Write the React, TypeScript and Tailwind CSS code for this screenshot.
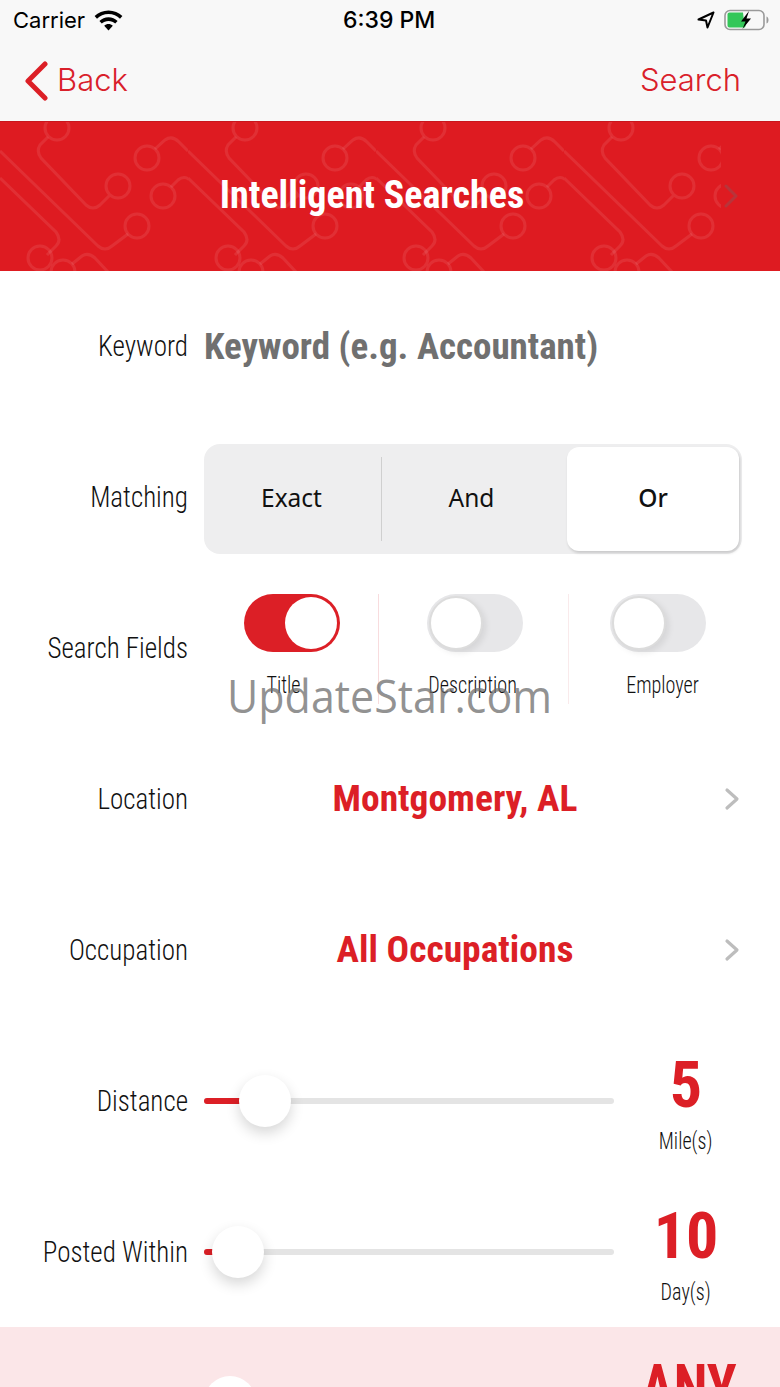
import React from 'react';

const narrow = "font-['Liberation_Sans_Narrow','Roboto_Condensed','Liberation_Sans',sans-serif]";

const CircuitPattern = () => (
  <svg className="absolute left-0 top-0 h-[150px] w-[721px]" viewBox="0 0 721 150" fill="none">
    <defs>
      <pattern id="circuit" width="188" height="150" patternUnits="userSpaceOnUse">
        <g stroke="#fff" strokeOpacity="0.085" strokeWidth="3">
          <circle cx="57" cy="6" r="12" />
          <path d="M48 15 L40 23 Q36 29 41 36 L86 83 Q93 89 100 83 L109 74" />
          <circle cx="118" cy="64" r="12" />
          <circle cx="147" cy="36" r="12" />
          <path d="M155 27 L165 18 Q172 13 179 20 L188 29" />
          <path d="M0 29 L98 124 Q105 130 112 124 L128 112" />
          <circle cx="137" cy="104" r="12" />
          <circle cx="163" cy="74" r="12" />
          <path d="M171 65 L178 58 Q184 53 190 58" />
          <path d="M0 56 L56 110 Q62 118 56 124 L47 133" />
          <circle cx="40" cy="136" r="12" />
          <circle cx="63" cy="150" r="12" />
          <path d="M72 142 L82 134 Q88 130 95 136 L108 150" />
        </g>
      </pattern>
    </defs>
    <rect width="721" height="150" fill="url(#circuit)" />
  </svg>
);

const StatusBar = () => (
  <div className="relative flex h-[40px] items-center justify-between pl-[13px] pr-[11px] text-black font-['Inter',sans-serif]">
    <div className="flex items-center gap-[9px]">
      <span className="text-[22px] leading-none">Carrier</span>
      <svg width="29" height="21" viewBox="0 0 29 21" fill="#000">
        <path d="M14.5 0.5C9 0.5 4.2 2.6 0.6 6.1L3 8.8C6 5.9 10 4.1 14.5 4.1S23 5.9 26 8.8L28.4 6.1C24.8 2.6 20 0.5 14.5 0.5Z" />
        <path d="M14.5 7.3C11 7.3 7.8 8.7 5.4 11L7.8 13.6C9.5 12 11.9 10.9 14.5 10.9S19.5 12 21.2 13.6L23.6 11C21.2 8.7 18 7.3 14.5 7.3Z" />
        <path d="M14.5 14C12.9 14 11.4 14.6 10.2 15.7L14.5 20.5L18.8 15.7C17.6 14.6 16.1 14 14.5 14Z" />
      </svg>
    </div>
    <span className="absolute left-[343px] top-[8px] text-[23px] font-medium leading-[24px]">6:39 PM</span>
    <div className="flex items-center gap-[9px]">
      <svg width="18" height="18" viewBox="0 0 18 18" fill="none" stroke="#000" strokeWidth="2" strokeLinejoin="round">
        <path d="M16.5 1.5L1.5 8.5L9 9.5L10.5 16.5Z" />
      </svg>
      <svg width="45" height="22" viewBox="0 0 45 22" fill="none">
        <rect x="1" y="1.5" width="39" height="19" rx="5" stroke="#9a9a9a" strokeWidth="1.6" />
        <path d="M42.5 7.5C44 8 44.5 9.5 44.5 11S44 14 42.5 14.5Z" fill="#9a9a9a" />
        <path d="M5.5 3.5H19L20 12H23L21 18.5H5.5C4.4 18.5 3.5 17.6 3.5 16.5V5.5C3.5 4.4 4.4 3.5 5.5 3.5Z" fill="#34c759" />
        <path d="M25 2L17 12.5H21.5L18.5 20L27 9.5H22.5Z" fill="#000" />
      </svg>
    </div>
  </div>
);

const NavBar = () => (
  <div className="relative flex h-[81px] items-center justify-between pl-[25px] pr-[39px] text-[31px] text-[#d9202a] font-['Inter',sans-serif] font-light">
    <div className="flex items-center gap-[9px]">
      <svg width="23" height="40" viewBox="0 0 23 40" fill="none" stroke="#dc1f26" strokeWidth="5" strokeLinecap="round" strokeLinejoin="round">
        <path d="M20 3L3 20L20 37" />
      </svg>
      <span>Back</span>
    </div>
    <span>Search</span>
  </div>
);

const Row = ({ label, children }: { label: string; children: React.ReactNode }) => (
  <div className="flex h-[150.86px] items-center">
    <div className={`w-[188px] shrink-0 origin-right scale-x-[0.9] whitespace-nowrap text-right text-[30px] font-light leading-none text-[#111] ${narrow}`}>{label}</div>
    <div className="ml-[16px] flex min-w-0 flex-1 items-center">{children}</div>
  </div>
);

const Chevron = () => (
  <svg className="absolute right-[40px]" width="16" height="24" viewBox="0 0 16 24" fill="none" stroke="#bdbdbd" strokeWidth="3.2" strokeLinecap="round" strokeLinejoin="round">
    <path d="M3 3L13 12L3 21" />
  </svg>
);

const LinkValue = ({ text }: { text: string }) => (
  <div className="relative flex flex-1 items-center">
    <div className={`w-[502px] text-center text-[37.5px] font-bold leading-none text-[#dc1f26] ${narrow}`}>{text}</div>
    <Chevron />
  </div>
);

const Toggle = ({ on }: { on?: boolean }) =>
  on ? (
    <div className="flex h-[58px] w-[96px] items-center justify-end rounded-full bg-[#dc1f26] pr-[3px]">
      <div className="h-[52px] w-[52px] rounded-full bg-white" />
    </div>
  ) : (
    <div className="flex h-[58px] w-[96px] items-center rounded-full bg-[#e7e7e9] pl-[2px]">
      <div className="h-[54px] w-[54px] rounded-full border-2 border-[#dcdcdc] bg-white shadow-[3px_3px_6px_rgba(0,0,0,0.08)]" />
    </div>
  );

const Field = ({ label, on, boxClass, labelClass }: { label: string; on?: boolean; boxClass: string; labelClass: string }) => (
  <div className={`flex h-[110px] flex-col items-center ${boxClass}`}>
    <Toggle on={on} />
    <div className={`mt-[21px] scale-x-[0.875] text-[23px] font-light leading-[26px] text-[#111] ${narrow} ${labelClass}`}>{label}</div>
  </div>
);

const Slider = ({ filled, thumb, value, unit }: { filled: string; thumb: string; value: string; unit: string }) => (
  <div className="flex flex-1 items-center">
    <div className="relative h-[6px] w-[410px] rounded-full bg-[#e4e4e4]">
      <div className={`h-[6px] rounded-l-full bg-[#dc1f26] ${filled}`} />
      <div className={`absolute top-[-23px] h-[52px] w-[52px] rounded-full bg-white shadow-[0_6px_14px_rgba(0,0,0,0.16)] ${thumb}`} />
    </div>
    <div className="ml-[22px] flex w-[100px] flex-col items-center">
      <div className={`mt-[9px] text-[64px] font-bold leading-[62px] text-[#dc1f26] ${narrow}`}>{value}</div>
      <div className={`mt-[12px] scale-x-[0.875] text-[23px] font-light leading-[26px] text-[#111] ${narrow}`}>{unit}</div>
    </div>
  </div>
);

const App = () => {
  return (
    <div className="relative h-[1387px] w-[780px] overflow-hidden bg-white">
      <div className="bg-[#f8f8f8]">
        <StatusBar />
        <NavBar />
      </div>

      <div className="relative flex h-[150px] items-center justify-center border-t border-[#c8161d] bg-[#de1b21] pb-[3px]">
        <CircuitPattern />
        <span className={`relative mr-[36px] text-[38px] font-bold leading-none text-white ${narrow}`}>Intelligent Searches</span>
        <svg className="absolute right-[42px] top-[62px]" width="14" height="24" viewBox="0 0 14 24" fill="none" stroke="#b8343a" strokeWidth="3" strokeLinecap="round" strokeLinejoin="round">
          <path d="M2 2L12 12L2 22" />
        </svg>
      </div>

      <Row label="Keyword">
        <span className={`text-[37px] font-bold leading-none text-[#707070] ${narrow}`}>Keyword (e.g. Accountant)</span>
      </Row>

      <Row label="Matching">
        <div className="mt-[3px] flex h-[110px] w-[538px] items-center rounded-[16px] bg-[#eeeeef] p-[3px] text-[24.5px] text-[#111] font-['Noto_Sans',sans-serif]">
          <div className="flex h-[84px] w-[175px] items-center justify-center border-r border-[#cfcfcf] pr-[5px]">Exact</div>
          <div className="flex h-[84px] w-[185px] items-center justify-center pr-[6px]">And</div>
          <div className="flex h-[104px] w-[172px] items-center justify-center rounded-[12px] bg-white font-medium shadow-[1px_2px_3px_rgba(0,0,0,0.16)]">Or</div>
        </div>
      </Row>

      <Row label="Search Fields">
        <div className="mt-[2px] grid w-[538px] grid-cols-[175px_190px_173px]">
          <Field label="Title" on boxClass="border-r border-[#f8dcde] pl-[2px]" labelClass="mr-[18px]" />
          <Field label="Description" boxClass="border-r border-[#f9eaeb] pl-[2px]" labelClass="mr-[4px]" />
          <Field label="Employer" boxClass="pl-[4px]" labelClass="ml-[11px]" />
        </div>
      </Row>

      <Row label="Location">
        <LinkValue text="Montgomery, AL" />
      </Row>

      <Row label="Occupation">
        <LinkValue text="All Occupations" />
      </Row>

      <Row label="Distance">
        <Slider filled="w-[40px]" thumb="left-[35px]" value="5" unit="Mile(s)" />
      </Row>

      <Row label="Posted Within">
        <Slider filled="w-[10px]" thumb="left-[8px]" value="10" unit="Day(s)" />
      </Row>

      <div className="flex h-[150px] items-start bg-[#fbe6e8]">
        <div className="relative ml-[204px] mt-[72px] h-[6px] w-[410px] rounded-full bg-[#e4e4e4]">
          <div className="absolute left-0 top-[-23px] h-[52px] w-[52px] rounded-full bg-white" />
        </div>
        <div className={`ml-[20px] mt-[31px] w-[100px] scale-x-[0.86] text-center text-[64px] font-bold leading-[62px] text-[#dc1f26] ${narrow}`}>ANY</div>
      </div>

      {/* watermark sits over the form */}
      <div className="absolute left-[227px] top-[665px] origin-left scale-x-[0.934] text-[46px] leading-[60px] text-[#6e6e6e]/75 font-['Open_Sans',sans-serif]">UpdateStar.com</div>
    </div>
  );
};

export default App;
